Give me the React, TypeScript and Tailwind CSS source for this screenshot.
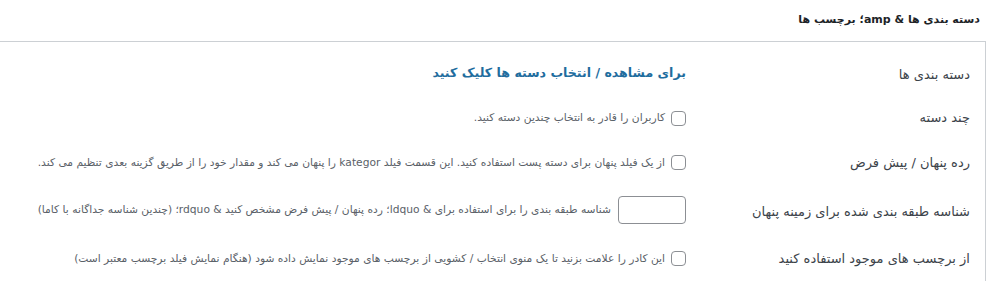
import React from "react";

function Checkbox() {
  return (
    <span className="inline-block w-[15px] h-[15px] shrink-0 rounded-[4px] border border-[#8c8f94] bg-white" />
  );
}

export default function App() {
  return (
    <div
      dir="rtl"
      className="w-[992px] h-[281px] overflow-hidden bg-white text-[#3c434a] font-['DejaVu_Sans',sans-serif]"
    >
      <h2 className="pr-[12px] pt-[12px] h-[41px] text-[11px] font-bold leading-[16px] text-[#1d2327]">
        {"دسته بندی ها & amp؛ برچسب ها"}
      </h2>
      <div className="mr-[6px] border-t border-r border-[#ccd0d4]">
        {/* Row 1 */}
        <div className="flex h-[56px]">
          <div className="w-[299px] shrink-0 pr-[15px] pt-[23px] text-[13px] leading-[20px]">
            دسته بندی ها
          </div>
          <div className="pt-[18px]">
            <span className="text-[12.6px] font-bold leading-[20px] text-[#1f6d9e]">
              برای مشاهده / انتخاب دسته ها کلیک کنید
            </span>
          </div>
        </div>
        {/* Row 2 */}
        <div className="flex h-[43px]">
          <div className="w-[299px] shrink-0 pr-[15px] pt-[10px] text-[13px] leading-[20px]">
            چند دسته
          </div>
          <div className="flex items-center gap-[6px] pt-[10px] h-[30px]">
            <Checkbox />
            <span className="text-[10.7px] leading-[18px] text-[#5a6168]">
              کاربران را قادر به انتخاب چندین دسته کنید.
            </span>
          </div>
        </div>
        {/* Row 3 */}
        <div className="flex h-[46px]">
          <div className="w-[299px] shrink-0 pr-[15px] pt-[12px] text-[13px] leading-[20px]">
            رده پنهان / پیش فرض
          </div>
          <div className="flex items-center gap-[6px] pt-[9px] h-[34px]">
            <Checkbox />
            <span className="text-[10.7px] leading-[18px] text-[#5a6168]">
              از یک فیلد پنهان برای دسته پست استفاده کنید. این قسمت فیلد kategor را پنهان می کند و مقدار خود را از طریق گزینه بعدی تنظیم می کند.
            </span>
          </div>
        </div>
        {/* Row 4 */}
        <div className="flex h-[49px]">
          <div className="w-[299px] shrink-0 pr-[15px] pt-[15px] text-[13px] leading-[20px]">
            شناسه طبقه بندی شده برای زمینه پنهان
          </div>
          <div className="flex items-center gap-[7px] pt-[9px] h-[37px]">
            <span className="inline-block w-[68px] h-[28px] shrink-0 rounded-[4px] border border-[#8c8f94] bg-white" />
            <span className="text-[10.7px] leading-[18px] text-[#5a6168]">
              {"شناسه طبقه بندی را برای استفاده برای & ldquo؛ رده پنهان / پیش فرض مشخص کنید & rdquo؛ (چندین شناسه جداگانه با کاما)"}
            </span>
          </div>
        </div>
        {/* Row 5 */}
        <div className="flex h-[60px]">
          <div className="w-[299px] shrink-0 pr-[15px] pt-[13px] text-[13px] leading-[20px]">
            از برچسب های موجود استفاده کنید
          </div>
          <div className="flex items-center gap-[6px] pt-[13px] h-[32px]">
            <Checkbox />
            <span className="text-[10.7px] leading-[18px] text-[#5a6168]">
              این کادر را علامت بزنید تا یک منوی انتخاب / کشویی از برچسب های موجود نمایش داده شود (هنگام نمایش فیلد برچسب معتبر است)
            </span>
          </div>
        </div>
      </div>
    </div>
  );
}
